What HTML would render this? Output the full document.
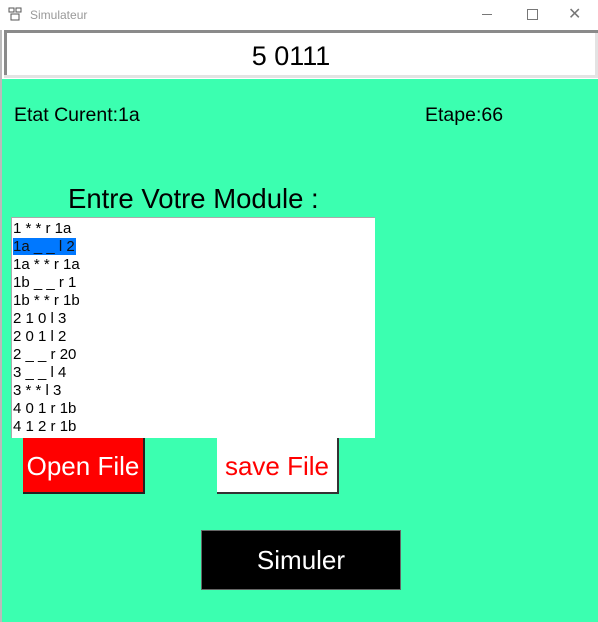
<!DOCTYPE html>
<html><head><style>
body{margin:0;width:598px;height:622px;overflow:hidden;background:#3bffb0;font-family:"Liberation Sans",Arial,sans-serif;position:relative}
.a{position:absolute}
</style></head><body>
<div class="a" style="left:0;top:0;width:598px;height:30px;background:#fff"></div>
<div class="a" style="left:8px;top:7px;width:14px;height:14px;">
<svg width="14" height="14"><rect x="1" y="1" width="5" height="4" fill="none" stroke="#555"/><rect x="8" y="1" width="5" height="4" fill="none" stroke="#555"/><rect x="3" y="7" width="8" height="6" fill="none" stroke="#555"/></svg></div>
<div class="a" style="left:30px;top:8px;font-size:12px;color:#999">Simulateur</div>
<div class="a" style="left:482px;top:14px;width:10px;height:1px;background:#777"></div>
<div class="a" style="left:527px;top:9px;width:9px;height:9px;border:1px solid #777"></div>
<div class="a" style="left:568px;top:4px;font-size:16px;color:#777">✕</div>
<div class="a" style="left:0;top:30px;width:598px;height:49px;background:#fff"></div>
<div class="a" style="left:4px;top:30px;width:594px;height:3px;background:#8a8a8a"></div>
<div class="a" style="left:4px;top:30px;width:3px;height:46px;background:#8a8a8a"></div>
<div class="a" style="left:4px;top:75px;width:594px;height:3px;background:#e3e3e3"></div>
<div class="a" style="left:595px;top:33px;width:3px;height:44px;background:#e3e3e3"></div>
<div class="a" style="left:0;top:30px;width:2px;height:592px;background:#bbb"></div>
<div class="a" style="left:-8px;top:41px;width:598px;text-align:center;font-size:27px">5 0111</div>
<div class="a" style="left:14px;top:104px;font-size:19.5px">Etat Curent:1a</div>
<div class="a" style="left:425px;top:104px;font-size:19.5px">Etape:66</div>
<div class="a" style="left:68px;top:183px;font-size:27.5px">Entre Votre Module :</div>
<div class="a" style="left:11px;top:217px;width:364px;height:221px;background:#fff;border-top:1px solid #aaa;border-left:1px solid #aaa;font-size:15px;line-height:18px;box-sizing:border-box;padding:2px 0 0 1px;overflow:hidden">
<div>1 * * r 1a</div>
<div><span style="background:#0078ff;color:#111;padding-right:1px">1a _ _ l 2</span></div>
<div>1a * * r 1a</div>
<div>1b _ _ r 1</div>
<div>1b * * r 1b</div>
<div>2 1 0 l 3</div>
<div>2 0 1 l 2</div>
<div>2 _ _ r 20</div>
<div>3 _ _ l 4</div>
<div>3 * * l 3</div>
<div>4 0 1 r 1b</div>
<div>4 1 2 r 1b</div>
</div>
<div class="a" style="left:23px;top:438px;width:122px;height:56px;background:#f00;border-right:2px solid #222;border-bottom:2px solid #222;box-sizing:border-box;color:#fff;font-size:26px;text-align:center;line-height:56px">Open File</div>
<div class="a" style="left:217px;top:438px;width:122px;height:56px;background:#fff;border-right:2px solid #333;border-bottom:2px solid #333;box-sizing:border-box;color:#f00;font-size:26px;text-align:center;line-height:56px">save File</div>
<div class="a" style="left:201px;top:530px;width:200px;height:60px;background:#000;border:1px solid #666;box-sizing:border-box;color:#fff;font-size:26px;text-align:center;line-height:58px">Simuler</div>
</body></html>
